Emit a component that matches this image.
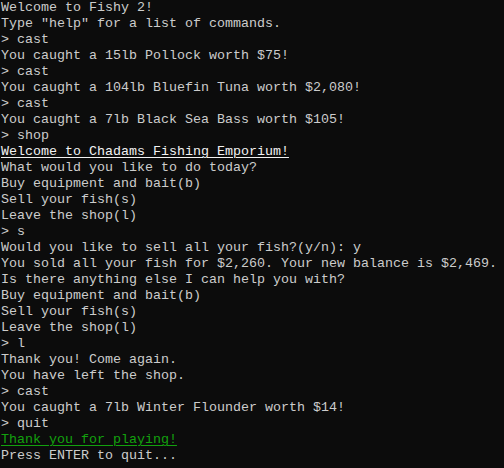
import React from "react";

type Line = { t: string; k?: "title" | "green" };

const lines: Line[] = [
  { t: "Welcome to Fishy 2!" },
  { t: 'Type "help" for a list of commands.' },
  { t: "> cast" },
  { t: "You caught a 15lb Pollock worth $75!" },
  { t: "> cast" },
  { t: "You caught a 104lb Bluefin Tuna worth $2,080!" },
  { t: "> cast" },
  { t: "You caught a 7lb Black Sea Bass worth $105!" },
  { t: "> shop" },
  { t: "Welcome to Chadams Fishing Emporium!", k: "title" },
  { t: "What would you like to do today?" },
  { t: "Buy equipment and bait(b)" },
  { t: "Sell your fish(s)" },
  { t: "Leave the shop(l)" },
  { t: "> s" },
  { t: "Would you like to sell all your fish?(y/n): y" },
  { t: "You sold all your fish for $2,260. Your new balance is $2,469." },
  { t: "Is there anything else I can help you with?" },
  { t: "Buy equipment and bait(b)" },
  { t: "Sell your fish(s)" },
  { t: "Leave the shop(l)" },
  { t: "> l" },
  { t: "Thank you! Come again." },
  { t: "You have left the shop." },
  { t: "> cast" },
  { t: "You caught a 7lb Winter Flounder worth $14!" },
  { t: "> quit" },
  { t: "Thank you for playing!", k: "green" },
  { t: "Press ENTER to quit..." },
];

export default function App() {
  return (
    <div
      className="w-[504px] h-[468px] overflow-hidden bg-[#0c0c0c] text-[#cccccc] pl-[1px] text-[13.33px] leading-[16px] whitespace-pre"
      style={{ fontFamily: '"Liberation Mono", "DejaVu Sans Mono", monospace' }}
    >
      {lines.map((l, i) => (
        <div key={i} className="h-[16px]">
          {l.k === "title" ? (
            <span className="text-[#f2f2f2] underline decoration-1 underline-offset-[2px]">{l.t}</span>
          ) : l.k === "green" ? (
            <span className="text-[#13a10e] underline decoration-1 underline-offset-[2px]">{l.t}</span>
          ) : (
            l.t
          )}
        </div>
      ))}
    </div>
  );
}
